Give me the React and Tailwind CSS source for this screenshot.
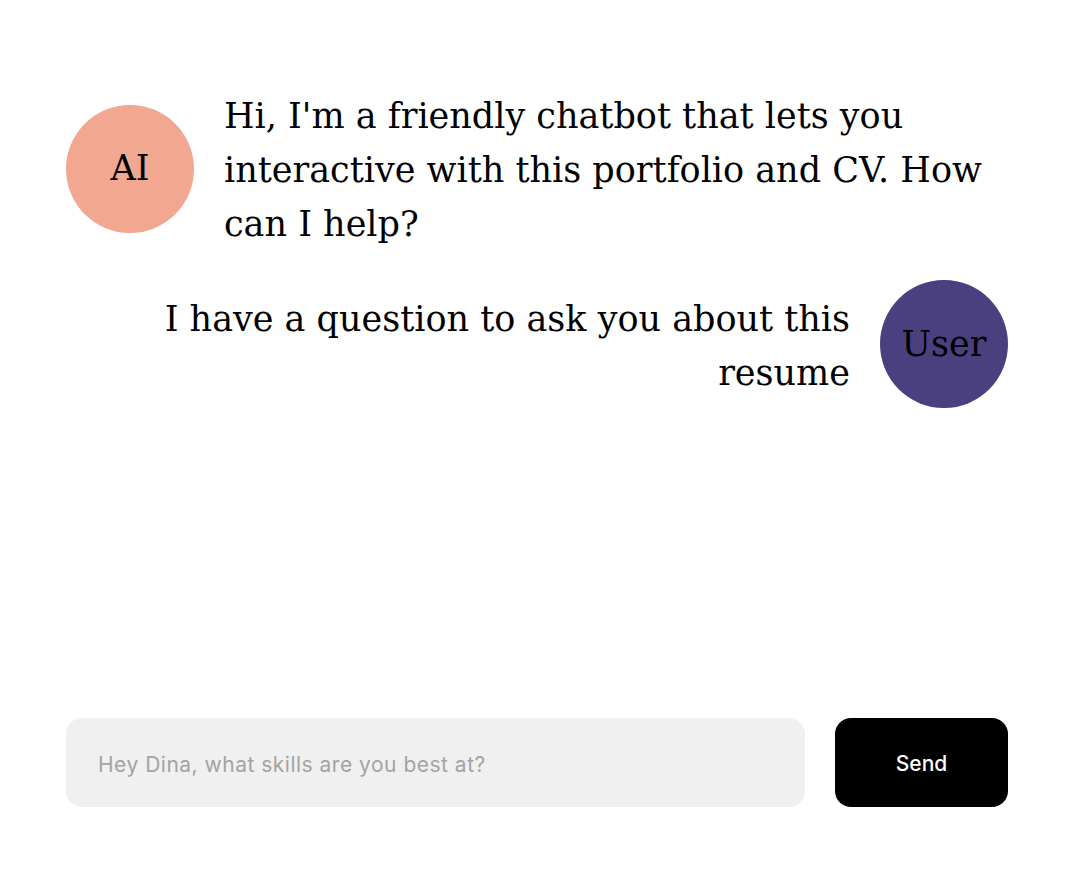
function Avatar({ label, color }) {
  return (
    <div
      className={`flex h-[128px] w-[128px] shrink-0 items-center justify-center rounded-full text-[35px] text-black ${color}`}
    >
      {label}
    </div>
  );
}

function Message({ from, text }) {
  const isUser = from === "user";
  return (
    <div
      className={`flex items-center gap-[30px] ${isUser ? "flex-row-reverse" : "flex-row"}`}
    >
      <Avatar
        label={isUser ? "User" : "AI"}
        color={isUser ? "bg-[#4a4080]" : "bg-[#f2a791]"}
      />
      <p
        className={`flex-1 pt-[3px] text-[35px] leading-[54px] text-black ${isUser ? "text-right" : "text-left"}`}
      >
        {text}
      </p>
    </div>
  );
}

export default function App() {
  const messages = [
    {
      from: "ai",
      text: "Hi, I'm a friendly chatbot that lets you interactive with this portfolio and CV. How can I help?",
    },
    {
      from: "user",
      text: "I have a question to ask you about this resume",
    },
  ];

  return (
    <div className="flex h-screen flex-col bg-white pl-[66px] pr-[76px] pt-[86px] pb-[71px] font-['DejaVu_Serif',serif]">
      <div className="flex flex-1 flex-col gap-[29px]">
        {messages.map((m, i) => (
          <Message key={i} from={m.from} text={m.text} />
        ))}
      </div>
      <form
        className="flex h-[89px] gap-[30px] font-['Inter',Arial,sans-serif]"
        onSubmit={(e) => e.preventDefault()}
      >
        <input
          type="text"
          placeholder="Hey Dina, what skills are you best at?"
          className="h-full flex-1 rounded-2xl bg-[#f0f0f0] px-8 pt-[3px] text-[21px] tracking-[0.5px] text-black outline-none placeholder:text-[#a3a3a3]"
        />
        <button
          type="submit"
          className="h-full w-[173px] rounded-2xl bg-black pt-[3px] text-[21px] font-medium text-white"
        >
          Send
        </button>
      </form>
    </div>
  );
}
